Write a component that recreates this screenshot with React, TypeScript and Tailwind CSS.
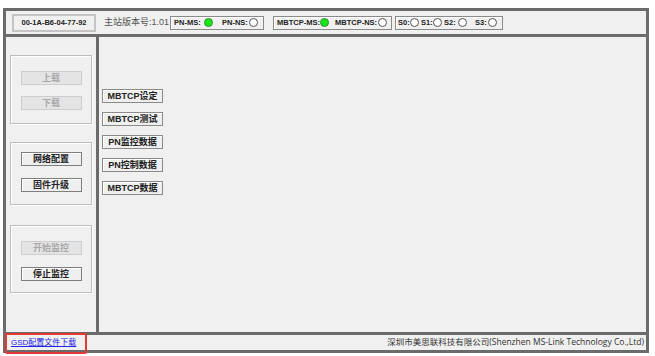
import React from "react";

const F = { fontFamily: '"Liberation Sans", "Noto Sans CJK SC", sans-serif' };

function Led({ label, on, lw, ml }: { label: string; on?: boolean; lw: number; ml: number }) {
  return (
    <div className="flex items-center" style={{ marginLeft: ml }}>
      <span className="text-[7.5px] font-bold text-[#222] leading-none whitespace-nowrap" style={{ width: lw }}>
        {label}
      </span>
      <span
        className={
          on
            ? "w-[9px] h-[9px] rounded-full bg-[#16e816] border border-[#3a8a3a]"
            : "w-[9px] h-[9px] rounded-full bg-white border border-[#555]"
        }
      />
    </div>
  );
}

function Btn({ children, disabled }: { children: React.ReactNode; disabled?: boolean }) {
  return (
    <div
      className={
        disabled
          ? "w-[61px] h-[14px] mx-auto flex items-center justify-center border border-[#cdcdcd] bg-[#e4e4e4] text-[#a8a8a8] text-[9px] font-bold leading-none"
          : "w-[61px] h-[14px] mx-auto flex items-center justify-center border border-[#7e7e7e] bg-[#efefef] text-[#222] text-[9px] font-bold leading-none shadow-[inset_1px_1px_0_#fff]"
      }
    >
      {children}
    </div>
  );
}

function RBtn({ children }: { children: React.ReactNode }) {
  return (
    <div className="w-[61px] h-[14px] flex items-center justify-center border border-[#8a8a8a] bg-[#efefef] text-[#222] text-[9px] font-bold leading-none shadow-[inset_1px_1px_0_#fff] whitespace-nowrap">
      {children}
    </div>
  );
}

export default function App() {
  return (
    <div className="w-[655px] h-[356px] bg-white relative overflow-hidden" style={F}>
      <div className="ml-[3px] mt-[8px] w-[646px] h-[345px] border-[3px] border-[#6b6b6b] bg-[#f0f0f0] flex flex-col">
        {/* header */}
        <div className="h-[23px] flex items-center">
          <div className="ml-[6px] w-[84px] h-[18px] border-2 border-[#c4c4c4] flex items-center justify-center text-[7.5px] font-bold text-[#222] leading-none">
            00-1A-B6-04-77-92
          </div>
          <span className="ml-[8px] w-[66px] text-[9px] text-[#555] leading-none whitespace-nowrap">主站版本号:1.01</span>
          <div className="w-[94px] h-[14px] border border-[#8a8a8a] shadow-[inset_1px_1px_0_#fff] flex items-center">
            <Led label="PN-MS:" on lw={30} ml={3} />
            <Led label="PN-NS:" lw={27} ml={9} />
          </div>
          <div className="ml-[9px] w-[119px] h-[14px] border border-[#8a8a8a] shadow-[inset_1px_1px_0_#fff] flex items-center">
            <Led label="MBTCP-MS:" on lw={43} ml={3} />
            <Led label="MBTCP-NS:" lw={43} ml={6} />
          </div>
          <div className="ml-[3px] w-[108px] h-[14px] border border-[#8a8a8a] shadow-[inset_1px_1px_0_#fff] flex items-center">
            <Led label="S0:" lw={12} ml={2} />
            <Led label="S1:" lw={12} ml={2} />
            <Led label="S2:" lw={14} ml={2} />
            <Led label="S3:" lw={13} ml={8} />
          </div>
        </div>
        <div className="h-[3px] bg-[#6b6b6b]" />
        {/* body */}
        <div className="h-[295px] flex">
          <div className="w-[90px] flex flex-col px-[4px]">
            <div className="mt-[18px] h-[69px] border border-[#bdbdbd] shadow-[inset_1px_1px_0_#fff,1px_1px_0_#fff] flex flex-col pt-[15px] gap-[11px]">
              <Btn disabled>上载</Btn>
              <Btn disabled>下载</Btn>
            </div>
            <div className="mt-[18px] h-[63px] border border-[#bdbdbd] shadow-[inset_1px_1px_0_#fff,1px_1px_0_#fff] flex flex-col pt-[9px] gap-[12px]">
              <Btn>网络配置</Btn>
              <Btn>固件升级</Btn>
            </div>
            <div className="mt-[20px] h-[68px] border border-[#bdbdbd] shadow-[inset_1px_1px_0_#fff,1px_1px_0_#fff] flex flex-col pt-[15px] gap-[12px]">
              <Btn disabled>开始监控</Btn>
              <Btn>停止监控</Btn>
            </div>
          </div>
          <div className="w-[3px] bg-[#6b6b6b]" />
          <div className="flex-1 flex flex-col pl-[3px] pt-[52px] gap-[9px]">
            <RBtn>MBTCP设定</RBtn>
            <RBtn>MBTCP测试</RBtn>
            <RBtn>PN监控数据</RBtn>
            <RBtn>PN控制数据</RBtn>
            <RBtn>MBTCP数据</RBtn>
          </div>
        </div>
        <div className="h-[3px] bg-[#6b6b6b]" />
        {/* footer */}
        <div className="h-[15px] flex items-center">
          <span className="ml-[5px] text-[8px] text-[#2323e6] underline leading-none whitespace-nowrap">GSD配置文件下载</span>
          <span className="ml-auto pr-[2px] text-[8.5px] text-[#333] leading-none whitespace-nowrap">
            深圳市美思联科技有限公司
            <span style={{ fontFamily: '"Open Sans", "Noto Sans CJK SC", sans-serif' }}>(Shenzhen MS-Link Technology Co.,Ltd)</span>
          </span>
        </div>
      </div>
      <div className="absolute left-[5px] top-[333px] w-[82px] h-[21px] border-2 border-[#e53935] rounded-[2px]" />
    </div>
  );
}
